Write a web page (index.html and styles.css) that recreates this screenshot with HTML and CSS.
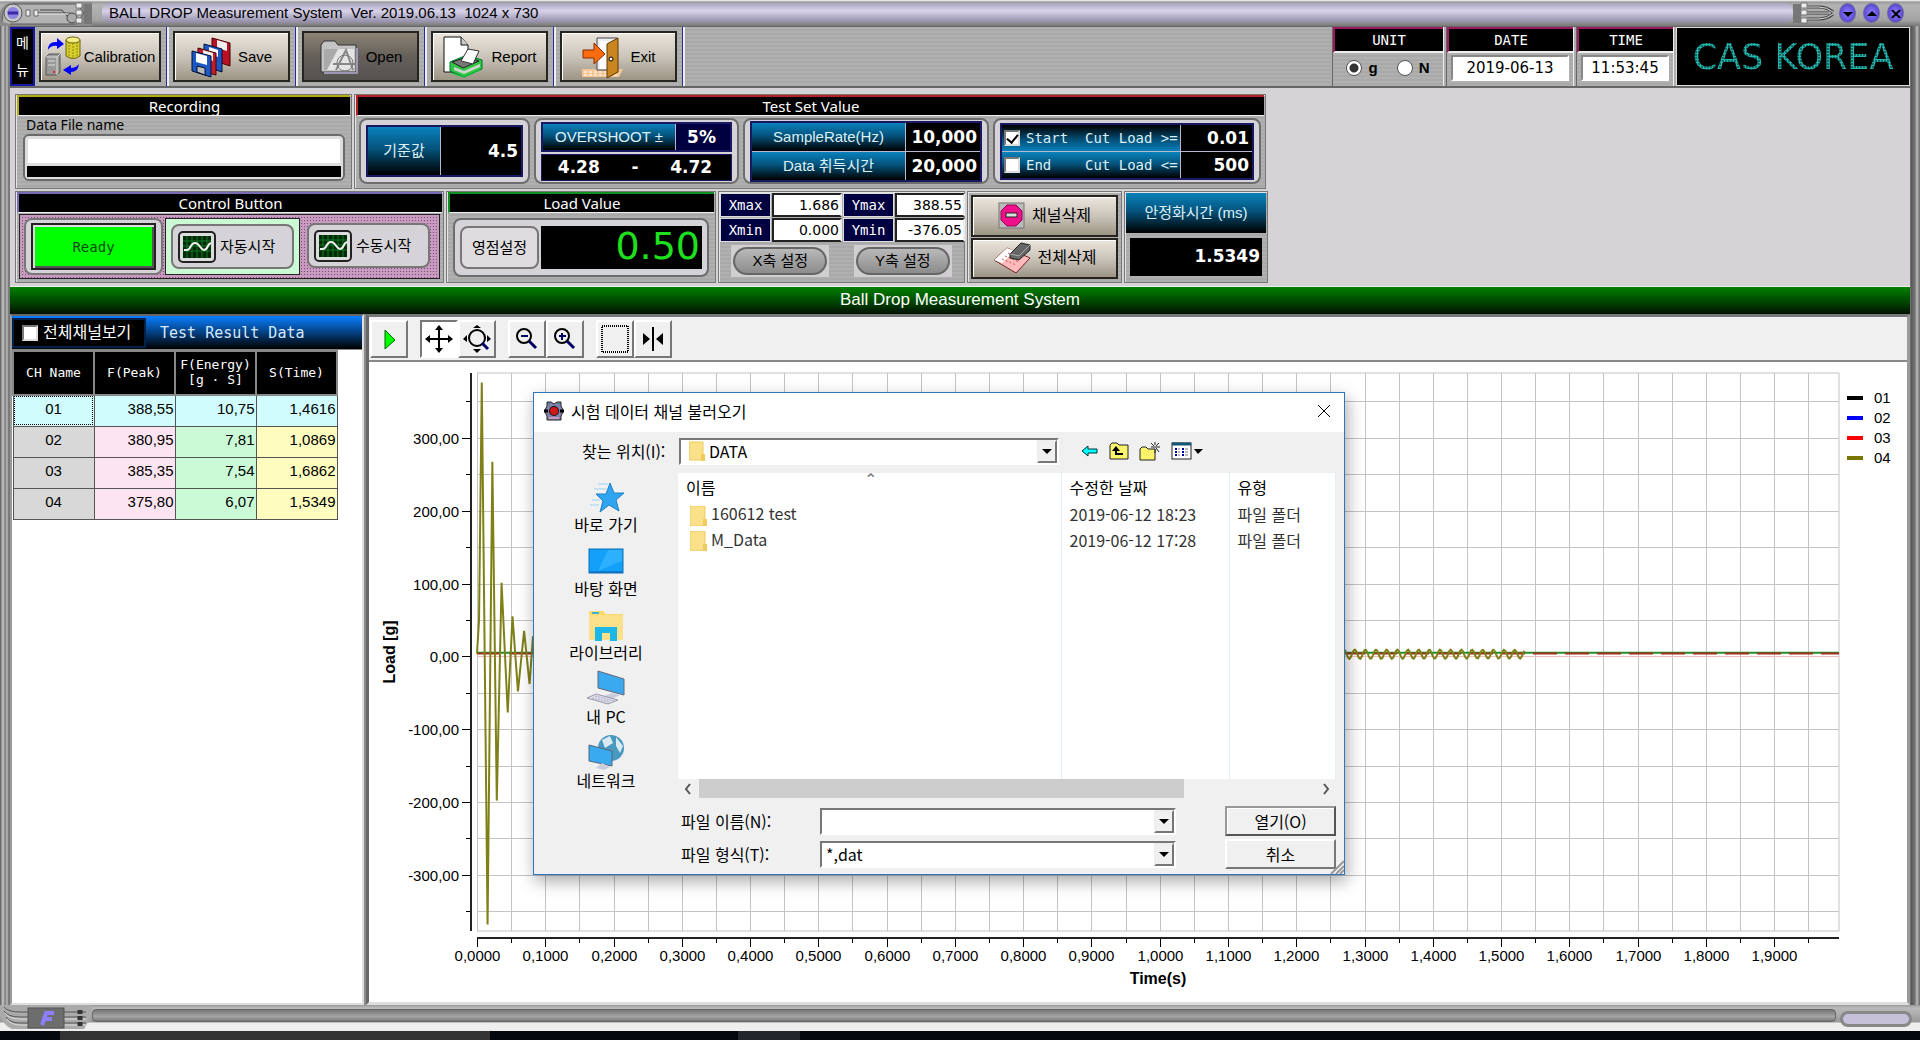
FILE: index.html
```html
<!DOCTYPE html>
<html lang="ko">
<head>
  <meta charset="UTF-8" />
  <meta name="viewport" content="width=device-width, initial-scale=1.0"/>
  <title>BALL DROP Measurement System</title>
  <link rel="stylesheet" href="styles.css">
</head>
<body>
  <div class="app">
    <header class="titlebar">
      <svg class="corner" width="92" height="26" viewBox="0 0 92 26">
        <path d="M0 26V12Q4 2 14 2H92V26Z" fill="#8b8b8b"/>
        <path d="M2 22Q2 4 14 4H76L84 13L76 24H10" fill="#b2b2b2" stroke="#5c5c5c"/>
        <circle cx="13" cy="13" r="9" fill="#c9c9c9" stroke="#555"/>
        <circle cx="13" cy="13" r="6" fill="#8d83e0"/>
        <path d="M8 13H18" stroke="#3a2aa8" stroke-width="3"/>
        <path d="M26 10H30V16H26ZM34 10H38V16H34Z" fill="#eee" stroke="#666"/>
        <path d="M38 13H70M40 10H62L72 22" fill="none" stroke="#444"/>
        <path d="M38 14H70" stroke="#eee"/>
        <circle cx="72" cy="18" r="5" fill="#aaa" stroke="#444"/>
        <path d="M76 3H82V8H76ZM76 10H82V15H76ZM76 18H82V23H76Z" fill="#eee" stroke="#777"/>
        <path d="M84 4H92V24H84Z" fill="#777"/>
      </svg>
      <div class="title-pill">BALL DROP Measurement System&nbsp; Ver. 2019.06.13&nbsp; 1024 x 730</div>
      <svg class="joint" width="46" height="26" viewBox="0 0 46 26">
        <path d="M0 4H8V23H0Z" fill="#777"/>
        <path d="M8 3H14V8H8ZM8 10H14V15H8ZM8 18H14V23H8Z" fill="#eee" stroke="#777"/>
        <path d="M14 13H36M14 7H26Q34 7 40 12M14 19H26Q34 19 40 14" fill="none" stroke="#444" stroke-width="3"/>
        <path d="M14 13H36M14 7H26Q34 7 40 12M14 19H26Q34 19 40 14" fill="none" stroke="#ddd"/>
      </svg>
      <div class="win-buttons">
        <button aria-label="Minimize"><svg width="10" height="8" viewBox="0 0 10 8"><path d="M0 2H10L5 7Z"/></svg></button>
        <button aria-label="Maximize"><svg width="10" height="8" viewBox="0 0 10 8"><path d="M0 6H10L5 1Z"/></svg></button>
        <button aria-label="Close"><svg width="10" height="8" viewBox="0 0 10 8"><path d="M1 0L9 8M9 0L1 8" stroke="#000" stroke-width="2"/></svg></button>
      </div>
    </header>

    <div class="frame">
      <nav class="toolbar">
        <div class="menu-label"><span>메</span><span>뉴</span></div>
        <div class="tool-slot">
          <button class="tool">
            <svg width="38" height="42" viewBox="0 0 38 42">
              <path d="M3 14Q3 5 12 6V2L19 8L12 13V10Q6 9 3 14Z" fill="#00f"/>
              <path d="M21 4V20Q28 25 35 20V4Z" fill="#d8cf2c" stroke="#6b6410"/>
              <path d="M24 6V21M28 7V22M32 6V21" stroke="#8f8718" stroke-dasharray="2 1"/>
              <ellipse cx="28" cy="4" rx="7" ry="3" fill="#f3ec83" stroke="#6b6410"/>
              <path d="M1 21L4 18H15V36L12 39H1Z" fill="#999" stroke="#555"/>
              <path d="M1 21H12V39M12 21L15 18M3 25H10M3 29H10" fill="none" stroke="#ddd"/>
              <path d="M8 36H10" stroke="#e22" stroke-width="2"/>
              <path d="M34 28Q33 36 26 36V39L18 34L26 29V32Q31 32 34 28Z" fill="#00f"/>
            </svg>
            Calibration
          </button>
        </div>
        <div class="tool-slot">
          <button class="tool">
            <svg width="40" height="42" viewBox="0 0 40 42">
              <path d="M21 2L39 7V30L21 24Z" fill="#b91024" stroke="#400"/>
              <path d="M26 4L36 7V15L26 12Z" fill="#eee"/>
              <path d="M13 8L31 13V36L13 30Z" fill="#1c57c4" stroke="#013"/>
              <path d="M18 11L27 14V21L18 18Z" fill="#fff"/>
              <path d="M7 12L25 17V39L7 34Z" fill="#c21d2e" stroke="#400"/>
              <path d="M12 14L22 17V25L12 22Z" fill="#eee"/>
              <path d="M1 15L20 20V41L1 35Z" fill="#1c57c4" stroke="#013"/>
              <path d="M5 17L16 20V29L5 26Z" fill="#fff"/>
              <path d="M6 30L14 32V39L6 36Z" fill="#bbb" stroke="#013"/>
            </svg>
            Save
          </button>
        </div>
        <div class="tool-slot">
          <button class="tool tool-pressed">
            <svg width="40" height="34" viewBox="0 0 40 34">
              <path d="M2 5L5 1H16L19 5H37V32H2Z" fill="#c4c4c4" stroke="#333"/>
              <path d="M5 9H35V30H5Z" fill="#e4e4e4"/>
              <path d="M5 9L19 9L8 30H5Z" fill="#aaa"/>
              <path d="M17 30L27 10L34 30M14 24H36" fill="none" stroke="#888" stroke-width="2"/>
              <circle cx="26" cy="23" r="8" fill="none" stroke="#777"/>
              <path d="M38 8V33H5" fill="none" stroke="#9d97b5" stroke-width="2"/>
            </svg>
            Open
          </button>
        </div>
        <div class="tool-slot">
          <button class="tool">
            <svg width="42" height="42" viewBox="0 0 42 42">
              <path d="M2 1H19L26 9V36H2Z" fill="#fff" stroke="#111"/>
              <path d="M19 1V9H26" fill="#ccc" stroke="#111"/>
              <path d="M8 26L25 19L40 24V33L22 41L8 35Z" fill="#2fc744" stroke="#073"/>
              <path d="M10 26L25 21L37 25L21 32Z" fill="#777" stroke="#222"/>
              <path d="M19 25L26 13L37 15L31 28Z" fill="#fff" stroke="#333"/>
              <path d="M12 31L22 35L38 28V31L22 38L12 34Z" fill="#d3d3d3"/>
              <path d="M9 37L22 41L38 34" fill="none" stroke="#0c3"/>
            </svg>
            Report
          </button>
        </div>
        <div class="tool-slot">
          <button class="tool">
            <svg width="42" height="42" viewBox="0 0 42 42">
              <path d="M1 33H42L38 41H1Z" fill="#f3c795"/>
              <path d="M3 36H38M3 39H36" stroke="#fff" stroke-dasharray="3 2"/>
              <path d="M16 2H36V34H16Z" fill="#eee" stroke="#444"/>
              <path d="M19 5H27V33H19Z" fill="#fff"/>
              <path d="M26 8L37 2V36L26 42Z" fill="#c98620" stroke="#5c3605"/>
              <circle cx="30" cy="23" r="2" fill="#fff" stroke="#000"/>
              <path d="M2 14H13V7L24 18L13 28V22H2Z" fill="#f86b0e" stroke="#8a2c00"/>
            </svg>
            Exit
          </button>
        </div>
        <div class="info">
          <section class="info-box info-unit">
            <h2>UNIT</h2>
            <div class="info-body">
              <label><input type="radio" name="unit" checked> g</label>
              <label><input type="radio" name="unit"> N</label>
            </div>
          </section>
          <section class="info-box info-date">
            <h2><label for="date">DATE</label></h2>
            <div class="info-body"><input class="clock" id="date" type="text" value="2019-06-13"></div>
          </section>
          <section class="info-box info-time">
            <h2><label for="time">TIME</label></h2>
            <div class="info-body"><input class="clock" id="time" type="text" value="11:53:45"></div>
          </section>
          <div class="led"><span>CAS KOREA</span></div>
        </div>
      </nav>

      <div class="panels">
        <div class="panel-row panel-row-top">
          <section class="panel panel-recording">
            <h2 class="edge-yellow">Recording</h2>
            <label class="file-label" for="dataFile">Data File name</label>
            <div class="file-box"><input id="dataFile" type="text"><div class="progress"></div></div>
          </section>
          <section class="panel panel-testset">
            <h2 class="edge-red">Test Set Value</h2>
            <div class="sets">
              <div class="group group-ref">
                <div class="cells cells-ref"><div class="cell-label">기준값</div><div class="cell-value">4.5</div></div>
              </div>
              <div class="group group-over">
                <div class="cells cells-over"><div class="cell-label cell-over">OVERSHOOT ±</div><div class="cell-value cell-navy">5%</div></div>
                <div class="range"><span>4.28</span><span>-</span><span>4.72</span></div>
              </div>
              <div class="group group-rate">
                <div class="cells cells-rate">
                  <div class="cell-label">SampleRate(Hz)</div><div class="cell-value">10,000</div>
                  <div class="cell-label">Data 취득시간</div><div class="cell-value">20,000</div>
                </div>
              </div>
              <div class="group group-cut">
                <div class="cells cells-cut">
                  <label class="cell-label cut-start"><input type="checkbox" checked>Start&nbsp; Cut Load &gt;=</label><div class="cell-value">0.01</div>
                  <label class="cell-label cut-end"><input type="checkbox">End&nbsp; &nbsp; Cut Load &lt;=</label><div class="cell-value">500</div>
                </div>
              </div>
            </div>
          </section>
        </div>

        <div class="panel-row panel-row-bottom">
          <section class="panel panel-control">
            <h2 class="edge-purple">Control Button</h2>
            <div class="control-body">
              <div class="ready-box"><button class="ready">Ready</button></div>
              <div class="start-box start-active"><button class="start">
                <svg class="scope" width="38" height="32" viewBox="0 0 38 32"><rect x="1" y="1" width="36" height="30" rx="4" fill="#ddd" stroke="#222" stroke-width="2"/><rect x="5" y="5" width="28" height="22" fill="#032a08"/><path d="M9 5V27M14 5V27M19 5V27M24 5V27M29 5V27M5 10H33M5 15H33M5 20H33" stroke="#0c7a20"/><path d="M6 19H9C13 19 12 12 17 12S22 19 26 19S29 13 33 12" fill="none" stroke="#eee" stroke-width="2"/></svg>자동시작</button></div>
              <div class="start-box"><button class="start">
                <svg class="scope" width="38" height="32" viewBox="0 0 38 32"><rect x="1" y="1" width="36" height="30" rx="4" fill="#ddd" stroke="#222" stroke-width="2"/><rect x="5" y="5" width="28" height="22" fill="#032a08"/><path d="M9 5V27M14 5V27M19 5V27M24 5V27M29 5V27M5 10H33M5 15H33M5 20H33" stroke="#0c7a20"/><path d="M6 19H9C13 19 12 12 17 12S22 19 26 19S29 13 33 12" fill="none" stroke="#eee" stroke-width="2"/></svg>수동시작</button></div>
            </div>
          </section>
          <section class="panel panel-load">
            <h2 class="edge-green">Load Value</h2>
            <div class="load-body"><button class="zero">영점설정</button><output class="load">0.50</output></div>
          </section>
          <section class="panel panel-axis">
            <div class="axis-grid">
              <label for="xmax">Xmax</label><input id="xmax" type="text" value="1.686">
              <label for="ymax">Ymax</label><input id="ymax" type="text" value="388.55">
              <label for="xmin">Xmin</label><input id="xmin" type="text" value="0.000">
              <label for="ymin">Ymin</label><input id="ymin" type="text" value="-376.05">
            </div>
            <div class="axis-buttons">
              <div class="pill-box"><button class="pill">X축 설정</button></div>
              <div class="pill-box"><button class="pill">Y축 설정</button></div>
            </div>
          </section>
          <section class="panel panel-delete">
            <button class="tool">
              <svg width="27" height="27" viewBox="0 0 27 27"><rect x="1" y="1" width="25" height="25" fill="#bbb" stroke="#777"/><path d="M9 3H18L24 9V18L18 24H9L3 18V9Z" fill="#f0108c" stroke="#900050"/><rect x="8" y="11" width="11" height="4" fill="#ddd" stroke="#222"/></svg>
              채널삭제
            </button>
            <button class="tool">
              <svg width="38" height="32" viewBox="0 0 38 32"><path d="M1 18L14 6L37 16L23 31Z" fill="#fbb" stroke="#722"/><path d="M1 18L14 6L22 9L9 21Z" fill="#fff"/><path d="M9 17L23 23M12 14L26 20M15 11L29 17" stroke="#c55" stroke-dasharray="2 2"/><path d="M17 12L28 1L37 3V8L26 18L17 16Z" fill="#666" stroke="#222"/><path d="M17 12L26 14L37 3" fill="none" stroke="#aaa"/></svg>
              전체삭제
            </button>
          </section>
          <section class="panel panel-stable">
            <div class="stable-label">안정화시간 (ms)</div>
            <output class="stable-value">1.5349</output>
          </section>
        </div>
      </div>

      <h1 class="banner">Ball Drop Measurement System</h1>

      <main class="work">
        <section class="results">
          <div class="results-head">
            <label class="show-all"><input type="checkbox">전체채널보기</label>
            <h2>Test Result Data</h2>
          </div>
          <table>
            <thead>
              <tr><th>CH Name</th><th>F(Peak)</th><th>F(Energy)<br>[g · S]</th><th>S(Time)</th></tr>
            </thead>
            <tbody>
              <tr class="selected"><td>01</td><td>388,55</td><td>10,75</td><td>1,4616</td></tr>
              <tr><td>02</td><td>380,95</td><td>7,81</td><td>1,0869</td></tr>
              <tr><td>03</td><td>385,35</td><td>7,54</td><td>1,6862</td></tr>
              <tr><td>04</td><td>375,80</td><td>6,07</td><td>1,5349</td></tr>
            </tbody>
          </table>
        </section>

        <section class="plot">
          <div class="plot-tools">
            <button aria-label="Run"><svg width="34" height="34" viewBox="0 0 34 34"><path d="M13 8L23 18L13 27Z" fill="#0f0" stroke="#060"/></svg></button>
            <button class="gap down" aria-label="Pan"><svg width="34" height="34" viewBox="0 0 34 34"><path d="M4 17H30M17 4V30" stroke="#000" stroke-width="2"/><path d="M3 17L8 13V21ZM31 17L26 13V21ZM17 3L13 8H21ZM17 31L13 26H21Z"/></svg></button>
            <button aria-label="Zoom to fit"><svg width="34" height="34" viewBox="0 0 34 34"><circle cx="17" cy="16" r="8" fill="none" stroke="#000" stroke-width="2"/><path d="M22 21L28 27" stroke="#006" stroke-width="3"/><path d="M17 3L13 6H21ZM17 31L13 27H21ZM3 17L7 13V20ZM31 17L27 13V20Z"/></svg></button>
            <button class="gap" aria-label="Zoom out"><svg width="34" height="34" viewBox="0 0 34 34"><circle cx="14" cy="14" r="7" fill="none" stroke="#000" stroke-width="2"/><path d="M19 19L26 26" stroke="#006" stroke-width="3"/><path d="M11 14H18" stroke="#006" stroke-width="2"/></svg></button>
            <button aria-label="Zoom in"><svg width="34" height="34" viewBox="0 0 34 34"><circle cx="14" cy="14" r="7" fill="none" stroke="#000" stroke-width="2"/><path d="M19 19L26 26" stroke="#006" stroke-width="3"/><path d="M11 14H18M14 11V18" stroke="#006" stroke-width="2"/></svg></button>
            <button class="gap" aria-label="Select area"><svg width="34" height="34" viewBox="0 0 34 34"><rect x="4" y="4" width="26" height="26" fill="none" stroke="#000" stroke-width="2" stroke-dasharray="1 1"/></svg></button>
            <button aria-label="Cursor"><svg width="34" height="34" viewBox="0 0 34 34"><path d="M17 5V29" stroke="#000" stroke-width="2"/><path d="M7 11L14 17L7 23ZM27 11L20 17L27 23Z"/></svg></button>
          </div>
          <div class="plot-area">
            <svg id="chart" class="chart" role="img" aria-label="Load over time"></svg>
            <ul class="legend">
              <li class="ch1">01</li>
              <li class="ch2">02</li>
              <li class="ch3">03</li>
              <li class="ch4">04</li>
            </ul>
          </div>
        </section>
      </main>
    </div>

    <footer class="footer">
      <svg width="92" height="26" viewBox="0 0 92 26">
        <path d="M0 0H92V10L84 24H12Q2 20 0 8Z" fill="#aaa"/>
        <path d="M4 6Q8 12 20 12H86M6 12Q10 18 20 18H86M4 2Q8 7 20 7H86" fill="none" stroke="#555"/>
        <path d="M5 8Q9 14 20 14H86M7 14Q11 20 20 20H86" fill="none" stroke="#ddd"/>
        <rect x="28" y="3" width="36" height="20" fill="#6d6d6d" stroke="#555"/>
        <path d="M42 20L46 8H54M44 14H52" fill="none" stroke="#8d7dff" stroke-width="4"/>
        <path d="M80 5V22" stroke="#333" stroke-width="5" stroke-dasharray="4 2"/>
      </svg>
      <div class="rail"></div>
      <div class="foot-end"></div>
    </footer>
    <div class="taskbar"><div class="task task-wide"></div><div class="task"></div><time>11:53</time></div>
  </div>

  <div class="dialog" role="dialog" aria-labelledby="dialogTitle">
    <div class="dialog-title">
      <svg width="20" height="20" viewBox="0 0 20 20"><path d="M3 1H7L10 3L13 1H17V5L19 9V11L17 15V19H3V15L1 11V9L3 5Z" fill="#8481ad" stroke="#222"/><path d="M4 2H7L5 5ZM16 2H13L15 5Z" fill="#4c8d8d"/><path d="M5 17H15" stroke="#c99ac0" stroke-width="2"/><circle cx="10" cy="10" r="5" fill="#111"/><circle cx="10" cy="10" r="4" fill="#d01818"/><path d="M0 10H4M16 10H20" stroke="#000" stroke-width="3"/></svg>
      <span id="dialogTitle">시험 데이터 채널 불러오기</span>
      <button aria-label="닫기"><svg width="14" height="14" viewBox="0 0 14 14"><path d="M1 1L13 13M13 1L1 13" stroke="#000"/></svg></button>
    </div>
    <div class="look">
      <label for="lookIn">찾는 위치(I):</label>
      <div class="combo">
        <svg width="16" height="20" viewBox="0 0 16 20"><path d="M0 1H14V19H0Z" fill="#fbe08a" stroke="#edc95c"/><path d="M12 13H16V20H12Z" fill="#f1cc5b"/></svg>
        <select id="lookIn"><option>DATA</option></select><span class="drop"></span>
      </div>
      <button aria-label="뒤로"><svg width="18" height="20" viewBox="0 0 18 20"><path d="M1 10L7 5V8H16V12H7V15Z" fill="#0ff" stroke="#033"/></svg></button>
      <button aria-label="한 수준 위로"><svg width="20" height="20" viewBox="0 0 20 20"><path d="M1 4L3 2H8L10 4H19V18H1Z" fill="#fbf36a" stroke="#222"/><path d="M7 7V13H14" fill="none" stroke="#000" stroke-width="2"/><path d="M3 10L7 5L11 10Z"/></svg></button>
      <button aria-label="새 폴더"><svg width="22" height="20" viewBox="0 0 22 20"><path d="M1 8L3 6H7L9 8H16V19H1Z" fill="#fbf36a" stroke="#222"/><path d="M12 6H21M16 1V4M16 8V12M12 2L15 5M20 2L17 5M20 11L17 7" stroke="#222"/></svg></button>
      <button aria-label="보기"><svg width="32" height="20" viewBox="0 0 32 20"><rect x="1" y="2" width="19" height="16" fill="#fff" stroke="#222"/><path d="M1 3H20" stroke="#157" stroke-width="3"/><path d="M4 8H6M11 8H13M4 11H6M11 11H13M4 14H6M11 14H13" stroke="#00a" stroke-width="2"/><path d="M7 8H9M14 8H17M7 11H9M14 11H17M7 14H9M14 14H17" stroke="#777"/><path d="M23 8H32L27 13Z"/></svg></button>
    </div>
    <div class="browse">
      <nav class="places">
        <a href="#">
          <svg width="36" height="32" viewBox="0 0 36 32"><path d="M22 1L26 11H36L28 18L31 29L21 23L12 30L15 19L8 12H18Z" fill="#2fa4ef" stroke="#1b80c8"/><path d="M10 2H20M6 7H18M4 18H12M2 23H11" stroke="#9fd0f2"/></svg>
          바로 가기</a>
        <a href="#">
          <svg width="36" height="32" viewBox="0 0 36 32"><rect x="1" y="3" width="34" height="24" fill="#12a0fb" stroke="#0b6fb8"/><path d="M2 26H34" stroke="#0a5fa0"/><path d="M20 4H34V15L10 25Z" fill="#2cb0ff"/></svg>
          바탕 화면</a>
        <a href="#">
          <svg width="36" height="32" viewBox="0 0 36 32"><path d="M1 1H15L18 4H35V30H1Z" fill="#fcd968"/><path d="M1 5H35V30H1Z" fill="#fbe08a"/><path d="M4 2H11V4H4Z" fill="#3cb4d8"/><path d="M7 31V17H29V31H22V23H14V31Z" fill="#1db6e8"/></svg>
          라이브러리</a>
        <a href="#">
          <svg width="40" height="36" viewBox="0 0 40 36"><path d="M12 1L38 9V25L12 18Z" fill="#39a9f0" stroke="#667"/><path d="M18 26L26 23L34 25L26 29Z" fill="#ccd"/><path d="M1 28L10 24L32 30L22 34Z" fill="#dde" stroke="#99a"/><path d="M6 28L24 32M9 26L28 31" stroke="#aab" stroke-dasharray="2 1"/></svg>
          내 PC</a>
        <a href="#">
          <svg width="36" height="36" viewBox="0 0 36 36"><circle cx="23" cy="14" r="13" fill="#4899c0"/><path d="M14 6L22 2L25 9L17 14ZM28 3L35 12L32 19L28 12Z" fill="#d9eaf2"/><path d="M1 11L24 17V32L1 27Z" fill="#39a9f0" stroke="#567"/><path d="M8 34L14 29L22 33L16 36Z" fill="#ccd"/></svg>
          네트워크</a>
      </nav>
      <div class="files">
        <table>
          <thead><tr><th><span class="sort">⌃</span>이름</th><th>수정한 날짜</th><th>유형</th></tr></thead>
          <tbody>
            <tr><td><svg width="17" height="20" viewBox="0 0 17 20"><path d="M0 0H15V20H0Z" fill="#fbe08a" stroke="#edc95c"/><path d="M13 13H17V20H13Z" fill="#f1cc5b"/></svg>160612 test</td><td>2019-06-12 18:23</td><td>파일 폴더</td></tr>
            <tr><td><svg width="17" height="20" viewBox="0 0 17 20"><path d="M0 0H15V20H0Z" fill="#fbe08a" stroke="#edc95c"/><path d="M13 13H17V20H13Z" fill="#f1cc5b"/></svg>M_Data</td><td>2019-06-12 17:28</td><td>파일 폴더</td></tr>
            <tr class="rest"><td></td><td></td><td></td></tr>
          </tbody>
        </table>
        <div class="scroll">
          <svg width="10" height="12" viewBox="0 0 10 12"><path d="M7 1L3 6L7 11" fill="none" stroke="#555" stroke-width="2"/></svg>
          <div class="thumb"></div>
          <svg width="10" height="12" viewBox="0 0 10 12"><path d="M3 1L7 6L3 11" fill="none" stroke="#555" stroke-width="2"/></svg>
        </div>
      </div>
    </div>
    <div class="fields">
      <label for="fileName">파일 이름(N):</label>
      <div class="combo"><input id="fileName" type="text"><span class="drop"></span></div>
      <button class="default">열기(O)</button>
      <label for="fileType">파일 형식(T):</label>
      <div class="combo"><select id="fileType"><option>*,dat</option></select><span class="drop"></span></div>
      <button>취소</button>
    </div>
    <svg class="grip" width="16" height="16" viewBox="0 0 16 16"><path d="M3 16L16 3M8 16L16 8M12 16L16 12" stroke="#999" stroke-width="2"/></svg>
  </div>

  <script src="chart.js"></script>
</body>
</html>
```

FILE: styles.css
```css
* {
  box-sizing: border-box;
}
body {
  margin: 0;
  font-family: "Liberation Sans", "Noto Sans CJK KR", sans-serif;
  font-size: 15px;
  line-height: 20px;
  color: #000;
  background: #000;
}
h1, h2 {
  margin: 0;
  font-weight: normal;
}
button, input, select {
  font: inherit;
  color: inherit;
  margin: 0;
  border-radius: 0;
}
button {
  padding: 0;
  border: none;
  background: none;
}
svg {
  flex: none;
}
.app {
  display: flex;
  flex-direction: column;
  height: 100vh;
  overflow: hidden;
  background: #8b8b8b;
}

/* window chrome */
.titlebar {
  display: flex;
  align-items: center;
  height: 26px;
  flex: none;
  padding-right: 16px;
  background: linear-gradient(#fff 0, #999 2px, #b4b4b4 5px, #a4a4a4 20px, #777 26px);
}
.title-pill {
  flex: 1;
  margin-left: 10px;
  padding-left: 7px;
  height: 20px;
  border-radius: 8px;
  background: linear-gradient(#aaa5bf, #d8d3e9 40%, #b9b4cd 65%, #8f8aa2);
}
.win-buttons {
  display: flex;
  gap: 7px;
}
.win-buttons button {
  width: 17px;
  height: 20px;
  line-height: 8px;
  border-radius: 50%;
  border: 1px solid #6b67a0;
  background: radial-gradient(#8f80ff, #5b49d6 70%, #aaa6d6);
}
.frame {
  flex: 1;
  min-height: 0;
  display: flex;
  flex-direction: column;
  padding: 0 10px;
  background: linear-gradient(90deg, #555 0, #ccc 3px, #777 5px, #bbb 7px, #666 9px, #8b8b8b 10px, #8b8b8b calc(100% - 10px), #555 calc(100% - 9px), #777 calc(100% - 5px), #bbb calc(100% - 3px), #666 100%);
}
.toolbar, .panel, .info-body {
  background: repeating-linear-gradient(#b0b0b0 0, #b0b0b0 2px, #a9a9a9 2px, #a9a9a9 4px);
}
.toolbar {
  display: flex;
  height: 62px;
  flex: none;
  border-top: 1px solid #666;
  border-bottom: 2px solid #666;
}
.menu-label {
  display: flex;
  flex-direction: column;
  justify-content: space-around;
  align-items: center;
  width: 25px;
  border: 2px solid #1717a0;
  background: #000;
  color: #fff;
  font-size: 14px;
}
.tool-slot {
  width: 129px;
  padding: 4px 6px 4px 4px;
  border-right: 2px solid #eee;
  box-shadow: inset -1px 0 #2b2ba0;
}
.tool-slot:nth-child(2) {
  width: 134px;
}
.tool {
  display: flex;
  align-items: center;
  justify-content: center;
  gap: 7px;
  width: 100%;
  height: 51px;
  border: 2px solid #26241f;
  box-shadow: inset 1px 1px #fff;
  background: linear-gradient(#ebe5dd, #cbc4ba 50%, #9c9484);
}
.tool-slot:nth-child(2) .tool {
  gap: 1px;
}
.tool-slot .tool-pressed {
  box-shadow: none;
  background: linear-gradient(#8b8373, #65605a 50%, #55524f);
}
.info {
  display: flex;
  flex: 1;
  justify-content: flex-end;
}
.info-box {
  display: flex;
  flex-direction: column;
  margin-right: 2px;
  border-left: 1px solid #666;
  border-right: 1px solid #eee;
}
.info-box h2 {
  height: 26px;
  border-top: 2px solid #a0185f;
  border-left: 2px solid #a0185f;
  border-bottom: 2px solid #eee;
  background: #000;
  color: #fff;
  font-family: "DejaVu Sans Mono", monospace;
  font-size: 14px;
  line-height: 22px;
  text-align: center;
}
.info-unit { width: 112px; }
.info-date { width: 128px; }
.info-time { width: 98px; }
.info-body {
  flex: 1;
  display: flex;
  align-items: center;
  justify-content: space-around;
  padding: 0 4px 3px;
}
.info-body label {
  display: flex;
  align-items: center;
  gap: 6px;
  font-weight: bold;
}
input[type="radio"] {
  appearance: none;
  width: 16px;
  height: 16px;
  border: 1px solid #555;
  border-radius: 50%;
  background: #fff;
}
input[type="radio"]:checked {
  background: radial-gradient(#333 4px, #fff 5px);
}
.clock {
  width: 100%;
  height: 26px;
  padding: 0;
  border: 2px solid;
  border-color: #888 #fff #fff #888;
  background: #fff;
  font-family: "DejaVu Sans", sans-serif;
  text-align: center;
}
.led {
  display: flex;
  align-items: center;
  justify-content: center;
  width: 234px;
  border: 1px solid #ddd;
  background: #000;
  font-family: "DejaVu Sans", sans-serif;
  font-size: 35px;
  line-height: 40px;
}
.led span {
  color: transparent;
  background: radial-gradient(circle, #23b5ac 1px, #000 2px) 0 0 / 3px 3px;
  background-clip: text;
  -webkit-background-clip: text;
}

/* setting panels */
.panels {
  flex: none;
  display: flex;
  flex-direction: column;
  gap: 2px;
  padding: 6px 0 3px 5px;
  background: #d5d3d5;
}
.panel-row {
  display: flex;
  gap: 2px;
}
.panel-row-top { height: 95px; }
.panel-row-bottom { height: 92px; }
.panel {
  display: flex;
  flex-direction: column;
  border: 1px solid #777;
  box-shadow: inset 1px 1px #e4e4e4;
}
.panel h2 {
  flex: none;
  height: 21px;
  margin: 0 1px;
  border-top: 2px solid;
  border-left: 2px solid;
  border-bottom: 1px solid #eee;
  background: #000;
  color: #fff;
  font-family: "Noto Sans", "Noto Sans CJK KR", sans-serif;
  font-size: 15px;
  line-height: 18px;
  text-align: center;
}
.panel .edge-yellow { border-top-color: #b3ae10; border-left-color: #b3ae10; }
.panel .edge-red { border-top-color: #b81f22; border-left-color: #b81f22; }
.panel .edge-purple { border-top-color: #7a6cb4; border-left-color: #7a6cb4; }
.panel .edge-green { border-top-color: #119022; border-left-color: #119022; }
.panel-recording { width: 337px; }
.panel-testset { width: 912px; }
.panel-control { width: 429px; }
.panel-load { width: 270px; }
.panel-axis { width: 247px; }
.panel-delete { width: 155px; }
.panel-stable { width: 144px; }
.file-label {
  padding-left: 10px;
  line-height: 18px;
  font-family: "Noto Sans", sans-serif;
  font-size: 14px;
}
.file-box {
  margin: 0 6px 7px 7px;
  padding: 2px;
  flex: 1;
  display: flex;
  flex-direction: column;
  gap: 2px;
  border: 2px solid #6a6a6a;
  border-radius: 6px;
  background: #ddd;
}
.file-box input {
  flex: 1;
  min-height: 0;
  border: 1px solid #ddd;
  background: #fff;
}
.progress {
  height: 11px;
  background: #000;
}
.sets {
  flex: 1;
  display: flex;
  gap: 4px;
  padding: 2px 4px 4px;
}
.group, .load-body {
  border: 2px solid #6d6d6d;
  border-radius: 8px;
  background: #d5d3d7;
}
.group {
  display: flex;
  flex-direction: column;
  justify-content: center;
  gap: 2px;
  padding: 0 5px;
}
.group-ref { width: 171px; }
.group-over { width: 205px; }
.group-rate { width: 246px; }
.group-cut { width: 268px; }
.cells {
  display: grid;
  gap: 1px;
  border: 2px solid #191963;
  background: #b8b8d0;
}
.cells-ref { grid-template: 48px / 72px 1fr; }
.cells-over { grid-template: 26px / 132px 1fr; }
.cells-rate { grid-template: 28px 28px / 153px 1fr; }
.cells-cut { grid-template: 26px 26px / 1fr 71px; }
.cell-label, .stable-label {
  display: flex;
  align-items: center;
  justify-content: center;
  background: linear-gradient(#0a82bc, #04537c 45%, #000);
  color: #dcf0f8;
}
.cell-value, .range {
  display: flex;
  align-items: center;
  justify-content: flex-end;
  padding-right: 3px;
  background: #000;
  color: #fff;
  font-family: "DejaVu Sans", sans-serif;
  font-weight: bold;
  font-size: 17px;
}
.cells-over .cell-navy {
  justify-content: center;
  background: #000040;
}
.range {
  height: 27px;
  justify-content: space-around;
  border: 1px solid #191963;
}
.cells .cut-start, .cells .cut-end {
  justify-content: flex-start;
  gap: 6px;
  padding-left: 2px;
  font-family: "DejaVu Sans Mono", monospace;
  font-size: 14px;
}
.cells .cut-start {
  background: linear-gradient(#000, #04537c 60%, #0a82bc);
}
input[type="checkbox"] {
  appearance: none;
  flex: none;
  width: 16px;
  height: 16px;
  border: 2px solid;
  border-color: #777 #ddd #ddd #777;
  background: #fff;
}
input[type="checkbox"]:checked::after {
  content: "";
  display: block;
  width: 5px;
  height: 9px;
  margin-left: 3px;
  border: solid #000;
  border-width: 0 2px 2px 0;
  transform: rotate(40deg);
}
.control-body {
  flex: 1;
  display: flex;
  align-items: center;
  gap: 2px;
  margin: 1px 3px 3px;
  padding: 0 4px;
  border: 1px solid #222;
  background: repeating-linear-gradient(90deg, #c99ac0 0, #c99ac0 2px, transparent 2px, transparent 3px), repeating-linear-gradient(#c99ac0 0, #c99ac0 2px, #7b4874 2px, #7b4874 3px);
}
.ready-box {
  width: 146px;
  height: 57px;
  padding: 3px 5px;
  border: 2px solid #777;
  border-radius: 8px;
  background: #d5d3d7;
}
.ready {
  width: 100%;
  height: 100%;
  border: 2px solid #222;
  box-shadow: inset 2px 2px #ddd, inset -2px -2px #555;
  background: #0f0;
  color: #064a06;
  font-family: "DejaVu Sans Mono", monospace;
  font-size: 14px;
}
.start-box {
  width: 135px;
  height: 57px;
  padding: 5px;
}
.start-active {
  border: 1px solid #222;
  background: #ccfad5;
}
.start {
  display: flex;
  align-items: center;
  gap: 4px;
  width: 123px;
  height: 45px;
  padding-left: 5px;
  border: 2px solid #777;
  border-radius: 8px;
  background: #d5d3d7;
}
.load-body {
  flex: 1;
  display: flex;
  gap: 2px;
  margin: 5px 6px;
  padding: 6px 5px;
}
.zero {
  width: 79px;
  border: 2px solid #777;
  border-radius: 8px;
  background: #dedcdf;
}
.load {
  flex: 1;
  background: #000;
  color: #1fe01f;
  font-family: "DejaVu Sans", sans-serif;
  font-size: 38px;
  line-height: 40px;
  text-align: right;
  padding-right: 2px;
}
.axis-grid {
  display: grid;
  grid-template: 24px 24px / 51px 70px 51px 70px;
  gap: 1px;
  padding: 1px;
}
.axis-grid label {
  border: 1px solid #ddd;
  background: #000040;
  color: #fff;
  font-family: "DejaVu Sans Mono", monospace;
  font-size: 14px;
  line-height: 22px;
  text-align: center;
}
.axis-grid input {
  min-width: 0;
  padding: 0 1px;
  border: 2px solid;
  border-color: #222 #eee #222 #222;
  background: #fff;
  font-family: "DejaVu Sans", sans-serif;
  font-size: 14px;
  line-height: 18px;
  text-align: right;
}
.axis-buttons {
  display: flex;
  justify-content: space-around;
  padding-top: 2px;
}
.pill-box {
  padding: 2px;
  background: #d0ced0;
}
.pill {
  width: 94px;
  height: 28px;
  border: 2px solid #666;
  border-radius: 14px;
  background: linear-gradient(#b9b9b9, #8c8c8c);
}
.panel-delete {
  gap: 1px;
  padding: 3px;
}
.panel-delete .tool {
  height: 42px;
  font-size: 16px;
}
.stable-label {
  height: 40px;
  margin: 1px;
}
.stable-value {
  flex: 1;
  margin: 4px 5px 6px;
  padding-right: 2px;
  background: #000;
  color: #fff;
  font-family: "DejaVu Sans", sans-serif;
  font-size: 17px;
  font-weight: bold;
  line-height: 36px;
  text-align: right;
}
.banner {
  flex: none;
  height: 28px;
  border-top: 1px solid #eee;
  background: linear-gradient(#008000, #004000 60%, #001000);
  color: #fff;
  font-size: 17px;
  line-height: 26px;
  text-align: center;
}

/* results and plot */
.work {
  flex: 1;
  min-height: 0;
  display: flex;
  gap: 2px;
}
.results {
  width: 354px;
  border: 2px solid;
  border-color: #666 #ddd #ddd #999;
  background: #fff;
}
.results-head {
  display: flex;
  align-items: center;
  height: 34px;
  background: linear-gradient(#0a7fff, #043f80 50%, #000);
  border-bottom: 1px solid #888;
}
.show-all {
  display: flex;
  align-items: center;
  gap: 5px;
  height: 30px;
  width: 134px;
  padding-left: 8px;
  border: 2px solid #02204a;
  background: #000;
  color: #fff;
  font-size: 16px;
}
.results-head h2 {
  padding-left: 14px;
  color: #d5eaff;
  font-family: "DejaVu Sans Mono", monospace;
  font-size: 15px;
}
.results table {
  border-collapse: collapse;
  table-layout: fixed;
  width: 326px;
}
.results th {
  height: 44px;
  padding: 0 0 2px;
  border: 2px solid #888;
  background: #000;
  color: #fff;
  font: 13px/15px "DejaVu Sans Mono", monospace;
}
.results td {
  height: 31px;
  padding: 0 1px 3px;
  border: 1px solid #555;
  text-align: right;
}
.results td:nth-child(1) { background: #d8d8d8; text-align: center; }
.results td:nth-child(2) { background: #fde4f2; }
.results td:nth-child(3) { background: #cbfad6; }
.results td:nth-child(4) { background: #fefdbf; }
.results .selected td { background: #d0fcfd; }
.results .selected td:first-child {
  outline: 1px dotted #000;
  outline-offset: -2px;
}
.plot {
  flex: 1;
  min-width: 0;
  display: flex;
  flex-direction: column;
  border: 3px solid;
  border-color: #777 #999 #ddd #666;
  background: #fff;
}
.plot-tools {
  display: flex;
  height: 45px;
  flex: none;
  padding: 3px 1px;
  border-bottom: 2px solid #888;
  background: #f0f0f0;
}
.plot-tools button {
  width: 38px;
  height: 38px;
  line-height: 0;
  border: 2px solid;
  border-color: #fff #777 #777 #fff;
}
.plot-tools .gap {
  margin-left: 12px;
}
.plot-tools .down {
  border-color: #777 #fff #fff #777;
  background: #fff;
}
.plot-area {
  flex: 1;
  min-height: 0;
  display: flex;
}
.chart {
  flex: 1;
  min-width: 0;
  height: 100%;
}
.chart .grid { stroke: #c4c4c4; }
.chart .axis { stroke: #222; stroke-width: 2; }
.chart .tick { stroke: #000; }
.chart .zero { stroke: #f3bcbc; }
.chart .base-green { stroke: #1f8f2a; stroke-width: 2; }
.chart .base-red { stroke: #a3301c; stroke-width: 2; stroke-dasharray: 24 8; }
.chart .wave { fill: none; stroke: #808018; stroke-width: 2; }
.chart .name { font-weight: bold; font-size: 16px; }
.legend {
  flex: none;
  width: 67px;
  margin: 0;
  padding: 26px 0 0 7px;
  list-style: none;
}
.legend li {
  display: flex;
  align-items: center;
  gap: 11px;
}
.legend li::before {
  content: "";
  width: 16px;
  height: 4px;
  background: #000;
}
.legend .ch2::before { background: #00f; }
.legend .ch3::before { background: #f00; }
.legend .ch4::before { background: #777700; }
.footer {
  display: flex;
  height: 26px;
  flex: none;
  background: linear-gradient(#999 0, #bbb 3px, #999 17px, #eee 18px);
}
.rail {
  flex: 1;
  height: 13px;
  margin-top: 4px;
  border: 1px solid #666;
  border-radius: 4px;
  background: linear-gradient(#777, #a5a5a5 60%, #777);
}
.foot-end {
  width: 72px;
  height: 16px;
  margin: 6px 8px 0 4px;
  border: 3px solid #888;
  border-radius: 8px;
  background: #c6c1d8;
}
.taskbar {
  display: flex;
  height: 9px;
  flex: none;
  overflow: hidden;
  padding-left: 60px;
  background: #03060c;
  color: #fff;
}
.task {
  width: 62px;
  background: #22262c;
}
.task-wide {
  width: 430px;
  margin-right: 248px;
  background: #333;
}
.taskbar time {
  margin-left: auto;
  padding: 4px 40px 0 0;
  font-size: 13px;
}

/* open dialog, floats over the plot */
.dialog {
  position: absolute;
  left: 533px;
  top: 392px;
  width: 812px;
  border: 1px solid #2c78b8;
  background: #f0f0f0;
  box-shadow: 2px 6px 16px rgba(0,0,0,0.35);
  font-family: "Noto Sans CJK KR", sans-serif;
  font-size: 16px;
}
.dialog-title {
  display: flex;
  align-items: center;
  gap: 7px;
  height: 39px;
  padding: 0 13px 4px 10px;
  background: #fff;
}
.dialog-title button {
  margin-left: auto;
  width: 14px;
  line-height: 0;
}
.look {
  display: flex;
  align-items: center;
  gap: 10px;
  height: 41px;
  padding: 0 0 3px 48px;
}
.look label {
  width: 87px;
}
.look button {
  line-height: 0;
}
.look .combo {
  width: 380px;
  margin-right: 12px;
}
.combo {
  display: flex;
  align-items: center;
  height: 27px;
  padding-left: 4px;
  border: 2px solid;
  border-color: #777 #fff #fff #777;
  background: #fff;
}
.combo svg {
  margin: 0 4px;
}
.combo select, .combo input {
  flex: 1;
  min-width: 0;
  height: 22px;
  padding: 0;
  border: none;
  background: none;
  appearance: none;
  line-height: 20px;
}
.drop {
  display: flex;
  align-items: center;
  justify-content: center;
  width: 20px;
  height: 23px;
  border: 2px solid;
  border-color: #eee #777 #777 #eee;
  background: #f0f0f0;
  pointer-events: none;
}
.drop::after {
  content: "";
  border: 5px solid transparent;
  border-top-color: #000;
  border-bottom: none;
}
.browse {
  display: flex;
  padding-right: 8px;
}
.places {
  width: 144px;
  display: flex;
  flex-direction: column;
}
.places a {
  display: flex;
  flex-direction: column;
  align-items: center;
  justify-content: flex-end;
  height: 64px;
  padding-bottom: 3px;
  color: #000;
  text-decoration: none;
}
.files {
  flex: 1;
}
.files table {
  width: 100%;
  height: 306px;
  border-collapse: collapse;
  background: #fff;
}
.files th, .files td {
  height: 24px;
  padding: 0 8px 3px;
  border-right: 1px solid #e4eef8;
  font-weight: normal;
  text-align: left;
  white-space: nowrap;
}
.files th:nth-child(1) { width: 383px; position: relative; }
.files th:nth-child(2) { width: 168px; }
.files th {
  height: 30px;
}
.files tbody {
  color: #333;
}
.files td:first-child {
  padding-left: 12px;
}
.files td svg {
  margin-right: 4px;
  vertical-align: middle;
}
.files .rest td {
  height: auto;
}
.sort {
  position: absolute;
  left: 186px;
  top: -3px;
  color: #777;
  line-height: 16px;
}
.scroll {
  display: flex;
  align-items: center;
  justify-content: space-between;
  height: 19px;
  padding: 0 5px;
}
.thumb {
  width: 485px;
  height: 19px;
  margin: 0 auto 0 6px;
  background: #cdcdcd;
}
.fields {
  display: grid;
  grid-template-columns: 139px 356px 1fr;
  align-items: center;
  row-gap: 3px;
  padding: 8px 8px 5px 147px;
}
.fields button {
  justify-self: end;
  width: 111px;
  height: 30px;
  border: 2px solid;
  border-color: #fff #777 #777 #fff;
}
.fields .default {
  border-color: #999 #555 #555 #999;
  box-shadow: inset 1px 1px #fff;
}
.grip {
  position: absolute;
  right: 0;
  bottom: 0;
}
```

FILE: chart.js
```js
const chart = document.getElementById('chart');
const NS = 'http://www.w3.org/2000/svg';

// [time in s, load in g] for the first beats
const beats = [
  [0, 4], [0.003, 50], [0.007, 376], [0.0155, -368], [0.0225, 267], [0.029, -198],
  [0.036, 101], [0.045, -77], [0.052, 55], [0.060, -48], [0.069, 35], [0.077, -38]
];

function add(name, attrs, text) {
  const el = document.createElementNS(NS, name);
  for (const key in attrs) el.setAttribute(key, attrs[key]);
  if (text) el.textContent = text;
  chart.appendChild(el);
}

function line(cls, x1, y1, x2, y2) {
  add('line', { class: cls, x1, y1, x2, y2 });
}

function draw() {
  chart.textContent = '';
  const box = chart.getBoundingClientRect();
  const left = 108, top = 11;
  const right = Math.round(box.width) - 1;
  const bottom = Math.round(box.height) - 71;
  const x = t => left + t * (right - left) / 1.995;
  const y = v => top + (389 - v) * (bottom - top) / 766;

  for (let i = 0; i < 40; i++) {
    const px = Math.round(x(i * 0.05)) + 0.5;
    line('grid', px, top, px, bottom);
    line('tick', px, bottom + 7, px, bottom + (i % 2 ? 12 : 16));
    if (i % 2 === 0) {
      add('text', { x: px, y: bottom + 30, 'text-anchor': 'middle' }, (i * 0.05).toFixed(4).replace('.', ','));
    }
  }
  line('grid', right, top, right, bottom);
  line('grid', left, top, right, top);
  line('grid', left, bottom, right, bottom);
  for (let v = -350; v <= 350; v += 50) {
    const py = Math.round(y(v)) + 0.5;
    line(v ? 'grid' : 'zero', left, py, right, py);
    line('tick', left - (v % 100 ? 11 : 15), py, left - 6, py);
    if (v % 100 === 0) {
      add('text', { x: left - 18, y: py + 5, 'text-anchor': 'end' }, v.toFixed(2).replace('.', ','));
    }
  }
  line('axis', left - 6, top, left - 6, bottom);
  line('axis', left, bottom + 7, right, bottom + 7);

  line('base-green', left, y(5), right, y(5));
  line('base-red', left, y(4), right, y(4));

  const points = beats.map(([t, v]) => x(t) + ',' + y(v));
  for (let t = 0.082; t < 1.535; t += 0.002) {
    const amp = 9 + 24 * Math.exp(-t * 5) - t * 2;
    points.push(x(t) + ',' + y(3 + amp * Math.sin(t * 402)));
  }
  add('polyline', { class: 'wave', points: points.join(' ') });

  add('text', { class: 'name', x: (left + right) / 2, y: bottom + 53, 'text-anchor': 'middle' }, 'Time(s)');
  add('text', { class: 'name', 'text-anchor': 'middle', transform: `translate(26 ${(top + bottom) / 2}) rotate(-90)` }, 'Load [g]');
}

window.addEventListener('resize', draw);
draw();
```
